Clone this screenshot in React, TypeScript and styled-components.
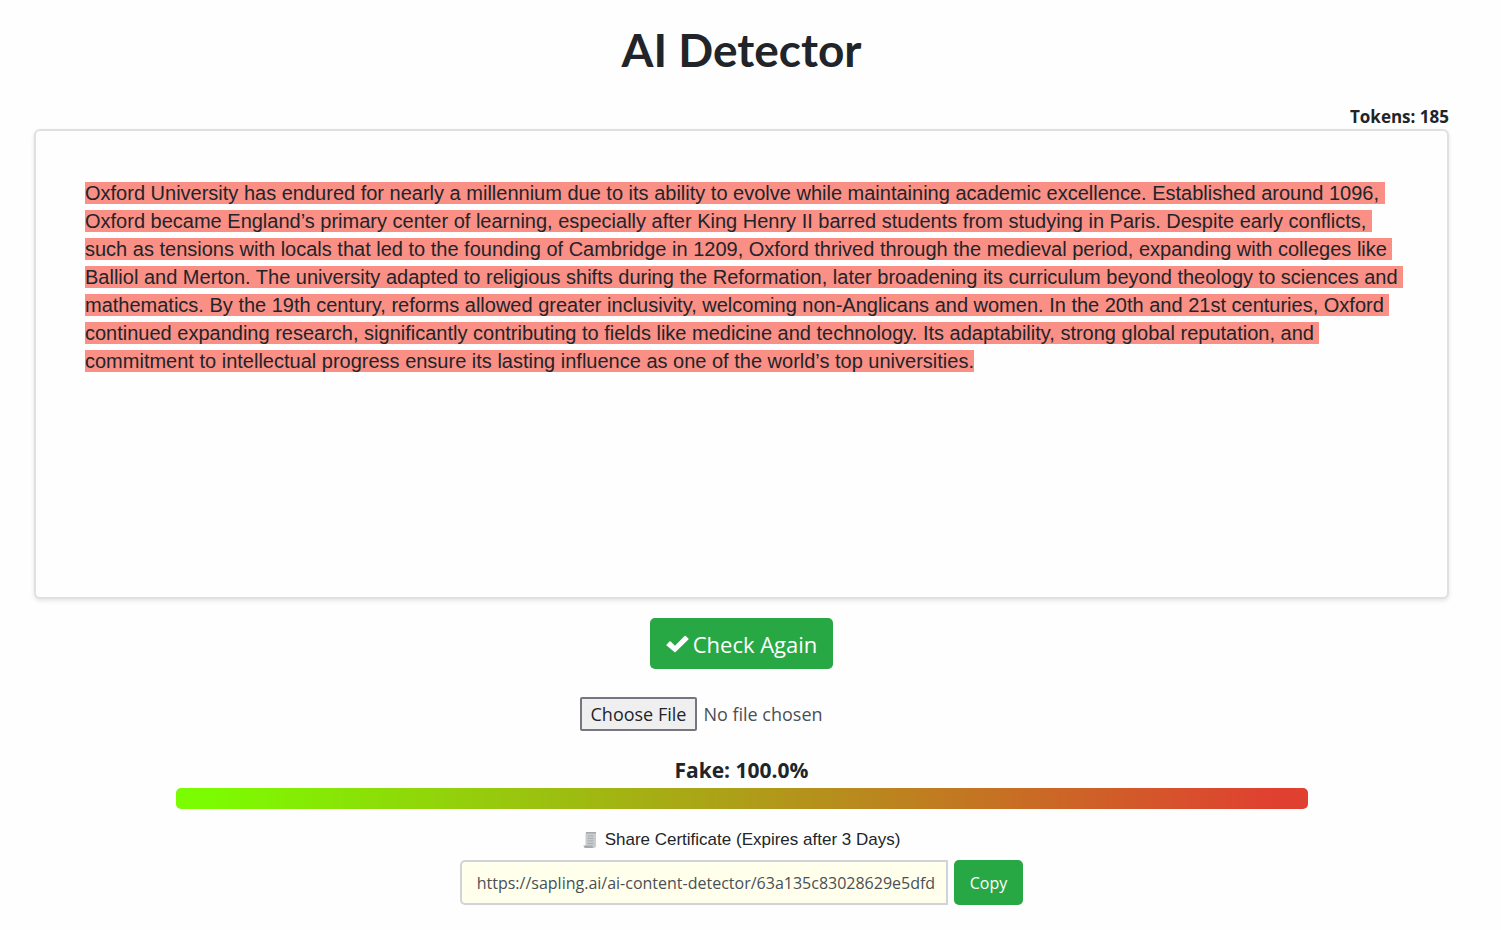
import React, { useState } from "react";
import styled, { createGlobalStyle } from "styled-components";

const uiFont = '"Segoe UI", "Open Sans", "Noto Sans", sans-serif';
const plainFont = 'Arial, "Liberation Sans", sans-serif';

const GlobalStyle = createGlobalStyle`
  *, *::before, *::after { box-sizing: border-box; }
  body {
    margin: 0;
    background: #fefefe;
    color: #212529;
    font-family: ${uiFont};
    font-size: 18px;
  }
`;

const Page = styled.main`
  display: flex;
  flex-direction: column;
  align-items: center;
  padding: 20px 52px 24px 34px;
`;

const Title = styled.h1`
  margin: 0;
  font-family: Lato, sans-serif;
  font-size: 46px;
  font-weight: 700;
  line-height: 60px;
`;

const TokenCount = styled.p`
  align-self: flex-end;
  margin: 24px 0 0;
  font-size: 17px;
  font-weight: 700;
  line-height: 25px;
`;

const Editor = styled.div`
  width: 100%;
  min-height: 470px;
  padding: 48px 40px 48px 49px;
  border: 2px solid #dfe0e1;
  border-radius: 6px;
  background: #fefefe;
  box-shadow: 0 2px 4px rgba(0, 0, 0, 0.1);
  font-family: ${plainFont};
  font-size: 20px;
  line-height: 28px;
  white-space: pre-wrap;
`;

const Flagged = styled.mark`
  background: #fa8f86;
  color: inherit;
`;

const GreenButton = styled.button<{ $large?: boolean }>`
  display: flex;
  align-items: center;
  justify-content: center;
  gap: 4px;
  height: ${(p) => (p.$large ? 51 : 45)}px;
  padding: 0 16px;
  border: 0;
  border-radius: 5px;
  background: #28a745;
  color: #fff;
  font-family: ${uiFont};
  font-size: ${(p) => (p.$large ? 22 : 16)}px;
  cursor: pointer;
`;

const CheckButton = styled(GreenButton)`
  margin-top: 19px;
`;

const FileInput = styled.input`
  width: 324px;
  margin-top: 28px;
  color: #495057;
  font-family: ${uiFont};
  font-size: 18px;

  &::file-selector-button {
    height: 34px;
    margin: 0 6px 0 0;
    padding: 0 9px;
    border: 2px solid #767682;
    border-radius: 2px;
    background: #efefef;
    color: #212529;
    font: inherit;
  }
`;

const Score = styled.h2`
  margin: 23px 0 0;
  font-size: 21px;
  font-weight: 700;
  line-height: 32px;
`;

const ScoreBar = styled.div`
  width: 80%;
  height: 21px;
  margin-top: 2px;
  border-radius: 5px;
  background: linear-gradient(to right, #7cfc00 3%, #e04030 97%);
`;

const ShareLabel = styled.label`
  display: flex;
  align-items: center;
  gap: 8px;
  margin-top: 19px;
  font-family: ${plainFont};
  font-size: 17px;
  line-height: 24px;
`;

const ShareRow = styled.div`
  display: flex;
  gap: 6px;
  margin-top: 8px;
`;

const UrlInput = styled.input`
  width: 488px;
  height: 45px;
  padding: 0 6px 0 15px;
  border: 2px solid #d0d4d8;
  border-radius: 5px 0 0 5px;
  background: #ffffec;
  color: #495057;
  font-family: ${uiFont};
  font-size: 16px;
`;

const lines = [
  "Oxford University has endured for nearly a millennium due to its ability to evolve while maintaining academic excellence. Established around 1096, ",
  "Oxford became England’s primary center of learning, especially after King Henry II barred students from studying in Paris. Despite early conflicts, ",
  "such as tensions with locals that led to the founding of Cambridge in 1209, Oxford thrived through the medieval period, expanding with colleges like ",
  "Balliol and Merton. The university adapted to religious shifts during the Reformation, later broadening its curriculum beyond theology to sciences and ",
  "mathematics. By the 19th century, reforms allowed greater inclusivity, welcoming non-Anglicans and women. In the 20th and 21st centuries, Oxford ",
  "continued expanding research, significantly contributing to fields like medicine and technology. Its adaptability, strong global reputation, and ",
  "commitment to intellectual progress ensure its lasting influence as one of the world’s top universities.",
];

const CheckIcon = () => (
  <svg width="23" height="18" viewBox="0 0 23 18" aria-hidden="true">
    <path d="M0.6 9.6 3.5 6.6q.6-.5 1.2 0L9 10.700 18.600.9q.6-.5 1.200 0l2.600 2.500q.5.6 0 1.200L9.600 17.100q-.6.6-1.200 0L.6 10.600q-.5-.5 0-1Z" fill="#fff" />
  </svg>
);

const ScrollIcon = () => (
  <svg width="14" height="18" viewBox="0 0 14 18" aria-hidden="true">
    <path d="M3 1h10v13.500q0 2.500-2.500 2.500H2.500V3Z" fill="#c9cccf" />
    <path d="M3 1h10v1.500H3ZM.5 14.500h9q0 2.500 1 2.500H2.500Q.5 17 .5 14.500Z" fill="#a6a9ac" />
    <path d="M4.500 5h6M4.500 7.500h6M4.500 10h6M4.500 12.500h6" stroke="#a9acae" />
  </svg>
);

export default function App() {
  const [url, setUrl] = useState("https://sapling.ai/ai-content-detector/63a135c83028629e5dfd");
  return (
    <>
      <GlobalStyle />
      <Page>
        <Title>AI Detector</Title>
        <TokenCount>Tokens: 185</TokenCount>
        <Editor>
          <Flagged>{lines.join("\n")}</Flagged>
        </Editor>
        <CheckButton type="button" $large>
          <CheckIcon />
          Check Again
        </CheckButton>
        <FileInput type="file" aria-label="Upload a document" />
        <Score>Fake: 100.0%</Score>
        <ScoreBar />
        <ShareLabel htmlFor="share-url">
          <ScrollIcon />
          Share Certificate (Expires after 3 Days)
        </ShareLabel>
        <ShareRow>
          <UrlInput id="share-url" value={url} onChange={(e) => setUrl(e.target.value)} />
          <GreenButton type="button">Copy</GreenButton>
        </ShareRow>
      </Page>
    </>
  );
}
